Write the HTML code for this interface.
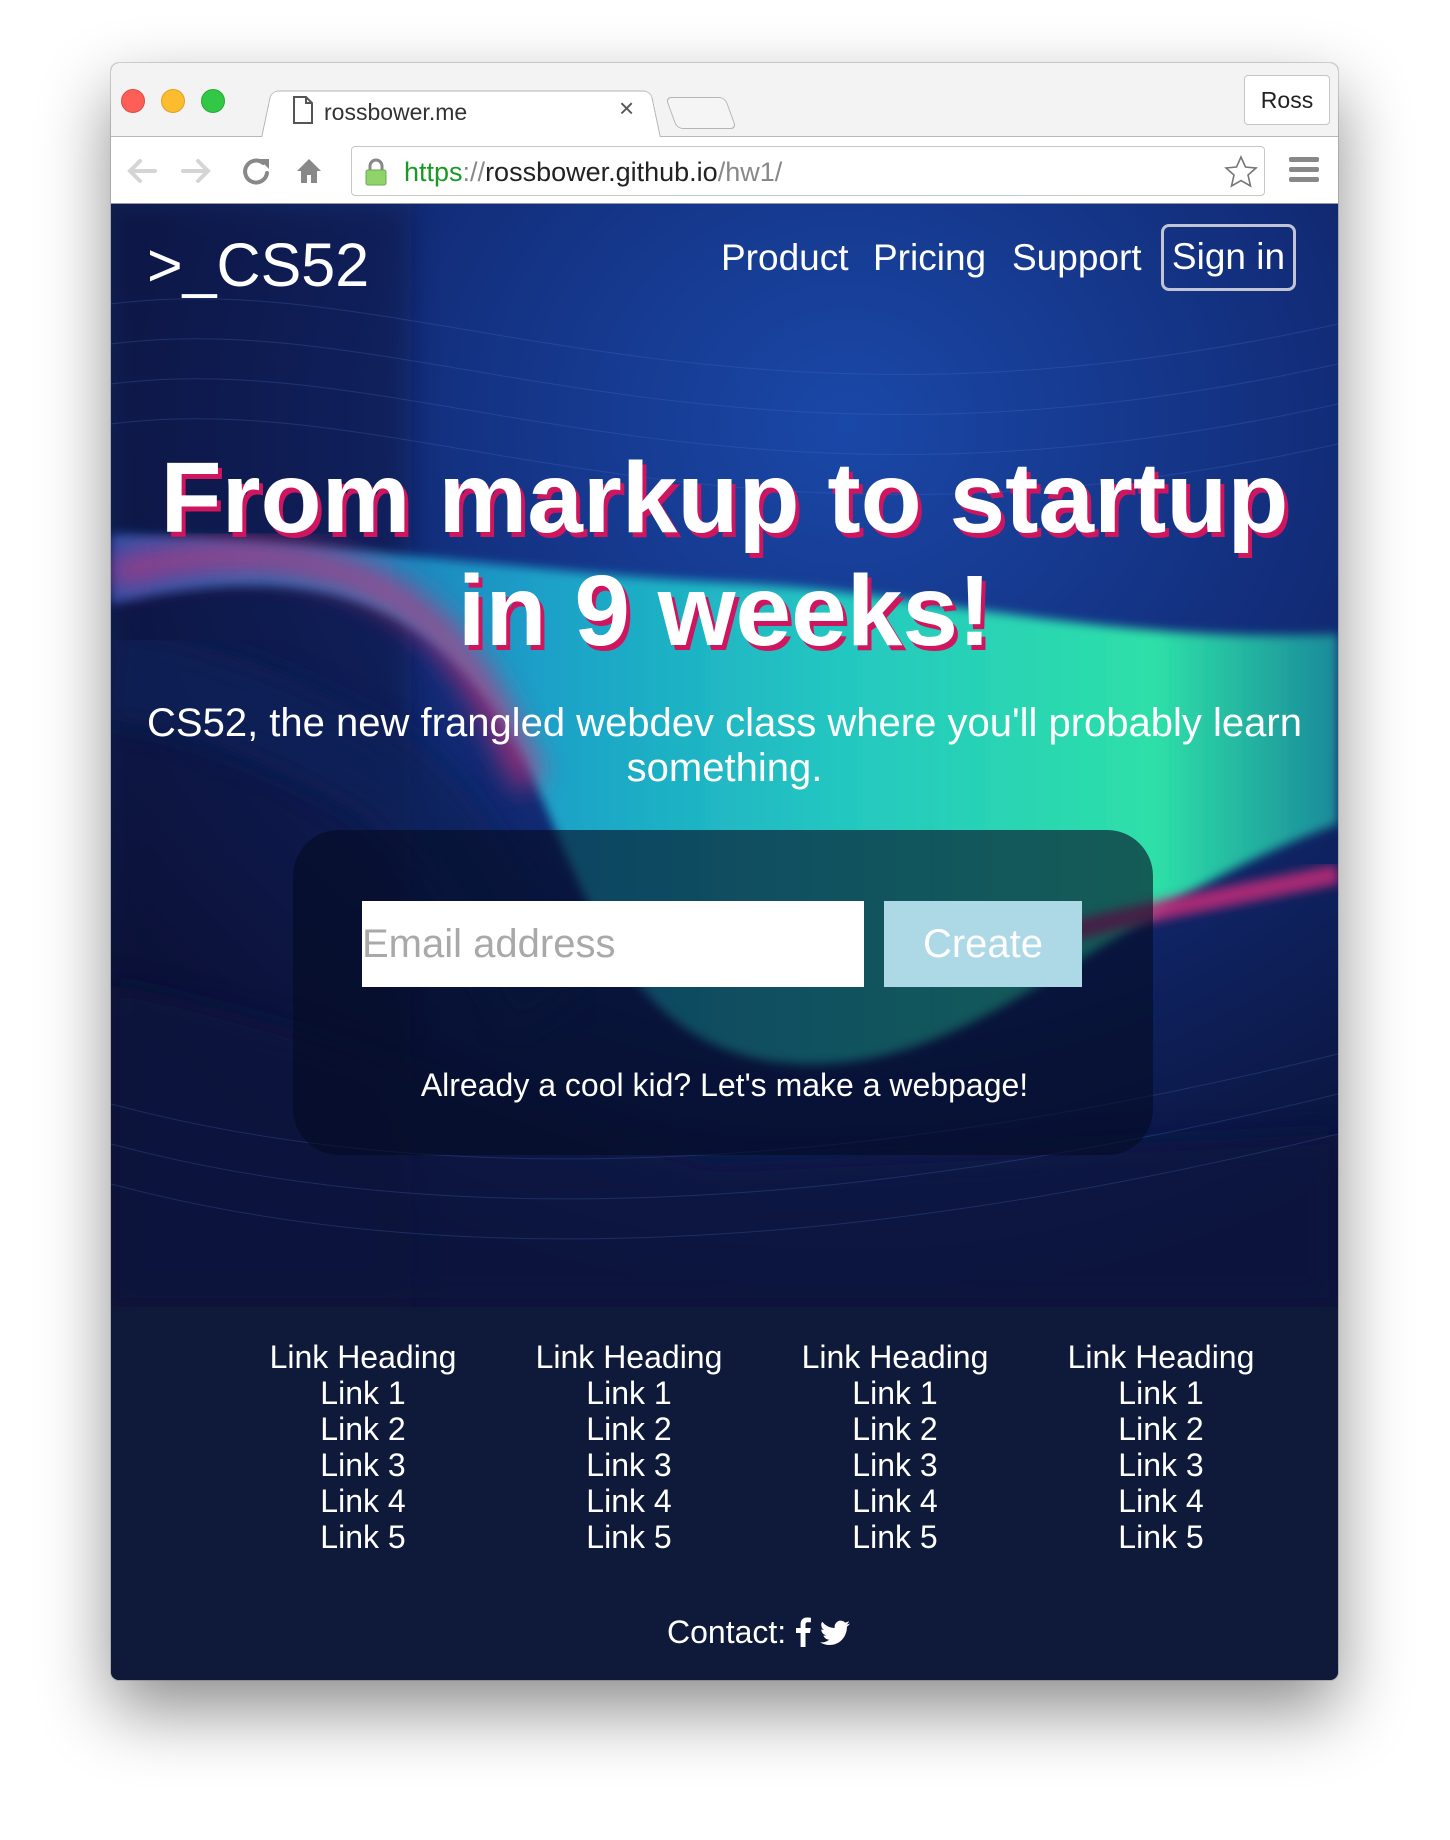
<!DOCTYPE html>
<html><head><meta charset="utf-8">
<style>
*{margin:0;padding:0;box-sizing:border-box}
html,body{width:1450px;height:1840px;background:#fff;overflow:hidden;font-family:"Liberation Sans",Arial,sans-serif}
.win{position:absolute;left:111px;top:63px;width:1227px;height:1617px;border-radius:8px;overflow:hidden;box-shadow:0 30px 70px rgba(0,0,0,.45),0 0 0 1px rgba(0,0,0,.15);background:#0f1a3a}
.tabbar{position:absolute;left:0;top:0;width:1227px;height:74px;background:#f3f3f3;border-bottom:1px solid #b8b8b8}
.dot{position:absolute;top:26px;width:24px;height:24px;border-radius:50%}
.tab{position:absolute;left:150px;top:24px;width:400px;height:51px;background:#fff;border:1px solid #b5b5b5;border-bottom:none;border-radius:8px 8px 0 0;transform:perspective(200px) rotateX(12deg);transform-origin:bottom}
.tabtxt{position:absolute;left:213px;top:36px;font-size:23px;color:#333}
.toolbar{position:absolute;left:0;top:74px;width:1227px;height:67px;background:#fff;border-bottom:1px solid #999}
.url{position:absolute;left:240px;top:9px;width:914px;height:50px;border:1px solid #c8c8c8;border-radius:4px;background:#fff}
.hero{position:absolute;left:0;top:141px;width:1227px;height:1103px;overflow:hidden;background:#0c1545}
.foot{position:absolute;left:0;top:1244px;width:1227px;height:373px;background:#0f1a3a;color:#fff}
.col{position:absolute;top:32px;width:240px;text-align:center;font-size:32px;line-height:36px}
</style></head><body>
<div class="win">
 <div class="tabbar">
  <div class="dot" style="left:10px;background:#fc5f57;border:1px solid #de4a42"></div>
  <div class="dot" style="left:50px;background:#fdbc2e;border:1px solid #dea124"></div>
  <div class="dot" style="left:90px;background:#33c748;border:1px solid #27aa35"></div>
  <div class="tab"></div>
  <svg style="position:absolute;left:181px;top:33px" width="22" height="28"><path d="M2 1h12l6 6v20H2z M14 1v6h6" fill="none" stroke="#555" stroke-width="2"/></svg>
  <div class="tabtxt">rossbower.me</div>
  <div style="position:absolute;left:508px;top:30px;font-size:26px;color:#555">×</div>
  <div style="position:absolute;left:560px;top:34px;width:60px;height:32px;border:1px solid #b5b5b5;border-radius:6px;transform:skewX(20deg);background:#f5f5f5"></div>
  <div style="position:absolute;left:1133px;top:12px;width:86px;height:50px;border:1px solid #c5c5c5;border-radius:4px;background:#fff;font-size:23px;text-align:center;line-height:48px;color:#222">Ross</div>
 </div>
 <div class="toolbar">
  <svg style="position:absolute;left:14px;top:18px" width="200" height="32"><g fill="none" stroke-width="4" stroke-linecap="round"><path d="M30 16H6M15 6 5 16l10 10" stroke="#d5d5d5"/><path d="M58 16h24M73 6l10 10-10 10" stroke="#d5d5d5"/><path d="M138 8a11 11 0 1 0 4 10" stroke="#888"/></g><path d="M134 4h10v10z" fill="#888"/><path d="M196 16 184 4 172 16h4v12h6v-8h4v8h6V16z" fill="#888"/></svg>
  <div class="url">
   <svg style="position:absolute;left:12px;top:11px" width="24" height="28"><path d="M6 12V8a6 6 0 0 1 12 0v4" fill="none" stroke="#888" stroke-width="3"/><rect x="2" y="12" width="20" height="15" rx="2" fill="#8fd36a" stroke="#6aa84f"/></svg>
   <div style="position:absolute;left:52px;top:10px;font-size:27px;color:#222"><span style="color:#1b9a23">https</span><span style="color:#888">://</span>rossbower.github.io<span style="color:#888">/hw1/</span></div>
   <svg style="position:absolute;left:872px;top:8px" width="34" height="34"><path d="M17 2l4.5 10 10.5 1-8 7 2.5 11L17 25.5 7.5 31 10 20 2 13l10.5-1z" fill="none" stroke="#777" stroke-width="1.6"/></svg>
  </div>
  <div style="position:absolute;left:1178px;top:20px;width:30px"><div style="height:5px;background:#888;border-radius:2px;margin-bottom:5px"></div><div style="height:5px;background:#888;border-radius:2px;margin-bottom:5px"></div><div style="height:5px;background:#888;border-radius:2px"></div></div>
 </div>
 <div class="hero">
  <svg width="1227" height="1103" style="position:absolute;left:0;top:0">
   <defs>
    <radialGradient id="bg" cx="0.6" cy="0.2" r="0.8"><stop offset="0" stop-color="#1a48a8"/><stop offset="0.5" stop-color="#122c78"/><stop offset="1" stop-color="#0a1238"/></radialGradient>
    <linearGradient id="tl" x1="0" y1="0" x2="1" y2="0"><stop offset="0" stop-color="#2a4fa8"/><stop offset="0.35" stop-color="#1aa0c8"/><stop offset="0.6" stop-color="#24c8c0"/><stop offset="0.85" stop-color="#2ee0a8"/><stop offset="1" stop-color="#1a8a9a"/></linearGradient>
    <filter id="b"><feGaussianBlur stdDeviation="14"/></filter>
    <filter id="b2"><feGaussianBlur stdDeviation="5"/></filter>
   </defs>
   <rect width="1227" height="1103" fill="url(#bg)"/>
   <rect x="0" y="0" width="300" height="1103" fill="#07102e" opacity="0.4" filter="url(#b)"/>
   <path d="M0 400 C250 340 350 430 420 570 C480 700 520 860 700 860 C880 860 1000 700 1227 620 L1227 430 C1000 440 820 390 640 380 C420 370 250 340 0 330Z" fill="url(#tl)" filter="url(#b2)"/>
   <path d="M0 370 C150 330 270 360 340 440 C380 490 400 540 420 580" stroke="#c8307a" stroke-width="30" fill="none" opacity="0.75" filter="url(#b)"/>
   <path d="M0 470 C100 480 200 530 270 570 C330 610 380 710 440 810" stroke="#10205a" stroke-width="90" fill="none" opacity="0.7" filter="url(#b)"/>
   <path d="M820 770 C960 720 1080 700 1227 670" stroke="#c02a78" stroke-width="20" fill="none" opacity="0.85" filter="url(#b2)"/>
   <path d="M0 780 C200 820 400 900 600 960 L1227 930 L1227 1103 L0 1103Z" fill="#0a1440" opacity="0.7" filter="url(#b)"/>
   <g stroke="#4a7ad0" stroke-width="1" fill="none" opacity="0.25">
    <path d="M0 100 C300 60 600 260 1227 120"/><path d="M0 140 C300 100 600 300 1227 160"/><path d="M0 180 C300 140 600 340 1227 200"/><path d="M0 220 C300 180 600 380 1227 240"/>
    <path d="M0 900 C300 980 700 980 1227 850"/><path d="M0 940 C300 1020 700 1020 1227 890"/><path d="M0 980 C300 1060 700 1060 1227 930"/>
   </g>
  </svg>
  <div style="position:absolute;left:36px;top:26px;font-size:61px;color:#fff">&gt;_CS52</div>
  <div style="position:absolute;left:610px;top:33px;font-size:37px;color:#fff">Product</div>
  <div style="position:absolute;left:762px;top:33px;font-size:37px;color:#fff">Pricing</div>
  <div style="position:absolute;left:901px;top:33px;font-size:37px;color:#fff">Support</div>
  <div style="position:absolute;left:1050px;top:20px;width:135px;height:67px;border:3px solid #c0c4d4;border-radius:8px;font-size:37px;color:#fff;text-align:center;line-height:60px">Sign in</div>
  <div style="position:absolute;left:0;top:238px;width:1227px;text-align:center;font-weight:bold;font-size:100px;line-height:113px;color:#fff;text-shadow:4px 5px 0 #d0155f">From markup to startup<br>in 9 weeks!</div>
  <div style="position:absolute;left:0;top:497px;width:1227px;text-align:center;font-size:40px;line-height:45px;color:#fff">CS52, the new frangled webdev class where you'll probably learn<br>something.</div>
  <div style="position:absolute;left:182px;top:626px;width:860px;height:325px;border-radius:46px;background:rgba(5,12,35,0.62)"></div>
  <div style="position:absolute;left:251px;top:697px;width:502px;height:86px;background:#fff;font-size:40px;color:#a9a9a9;line-height:86px">Email address</div>
  <div style="position:absolute;left:773px;top:697px;width:198px;height:86px;background:#add8e6;font-size:40px;color:#fff;line-height:86px;text-align:center">Create</div>
  <div style="position:absolute;left:0;top:863px;width:1227px;text-align:center;font-size:32px;color:#fff">Already a cool kid? Let's make a webpage!</div>
 </div>
 <div class="foot">
  <div class="col" style="left:132px">Link Heading<br>Link 1<br>Link 2<br>Link 3<br>Link 4<br>Link 5</div>
  <div class="col" style="left:398px">Link Heading<br>Link 1<br>Link 2<br>Link 3<br>Link 4<br>Link 5</div>
  <div class="col" style="left:664px">Link Heading<br>Link 1<br>Link 2<br>Link 3<br>Link 4<br>Link 5</div>
  <div class="col" style="left:930px">Link Heading<br>Link 1<br>Link 2<br>Link 3<br>Link 4<br>Link 5</div>
  <div style="position:absolute;left:556px;top:307px;font-size:32px;white-space:nowrap">Contact: <svg width="16" height="30" style="vertical-align:-4px"><path d="M10.5 30V16h4.5l.7-5h-5.2V7.8c0-1.5.4-2.5 2.6-2.5h2.8V.8C15.4.7 13.8.5 12 .5 8.2.5 5.6 2.8 5.6 7v4H1v5h4.6v14z" fill="#fff"/></svg> <svg width="30" height="26" viewBox="0 0 24 20" style="vertical-align:-3px"><path d="M24 2.4a9.8 9.8 0 0 1-2.8.8A4.9 4.9 0 0 0 23.3.5a9.8 9.8 0 0 1-3.1 1.2A4.9 4.9 0 0 0 11.8 6.1 14 14 0 0 1 1.7 1 4.9 4.9 0 0 0 3.2 7.6 4.9 4.9 0 0 1 1 7v.1a4.9 4.9 0 0 0 3.9 4.8 4.9 4.9 0 0 1-2.2.1 4.9 4.9 0 0 0 4.6 3.4A9.9 9.9 0 0 1 0 17.4 14 14 0 0 0 7.5 19.6c9.1 0 14-7.5 14-14v-.6A10 10 0 0 0 24 2.4z" fill="#fff"/></svg></div>
 </div>
</div>
</body></html>
